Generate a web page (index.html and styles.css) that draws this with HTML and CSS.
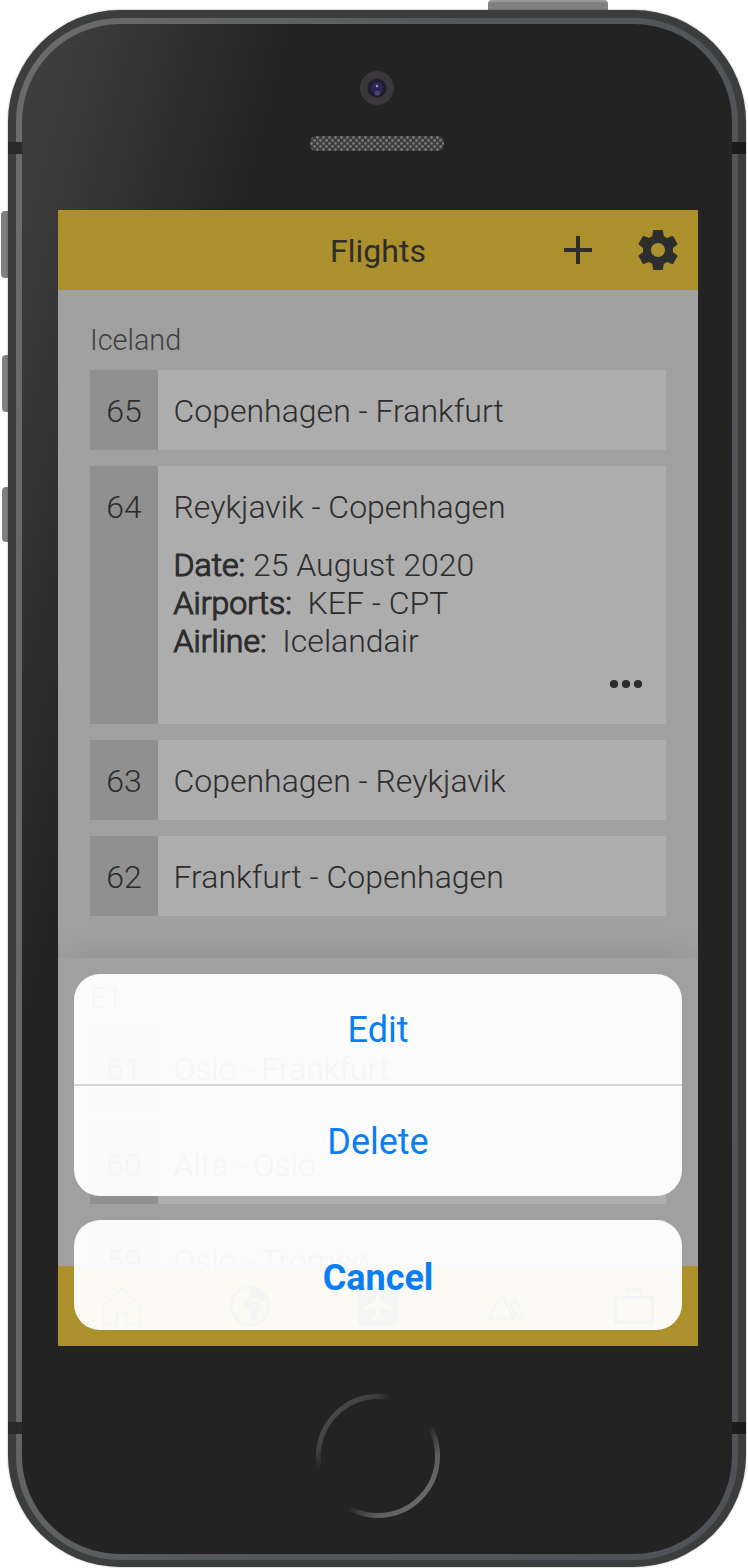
FILE: index.html
```html
<!DOCTYPE html>
<html lang="en">
<head>
<meta charset="utf-8">
<title>Flights</title>
<link rel="stylesheet" href="styles.css">
</head>
<body>
<div class="device">
  <i class="key key-power"></i>
  <i class="key key-mute"></i>
  <i class="key key-up"></i>
  <i class="key key-down"></i>
  <div class="shell">
    <div class="ring">
      <div class="face">
        <div class="top-bezel">
          <svg class="camera" viewBox="0 0 34 34">
            <circle cx="17" cy="17" r="17" fill="#3a383b"/>
            <circle cx="17" cy="17" r="9.5" fill="#211d30"/>
            <circle cx="17" cy="17" r="6" fill="#2b2650"/>
            <circle cx="17.5" cy="22" r="2.6" fill="#4b4775"/>
            <circle cx="17" cy="15" r="1.3" fill="#9a94c4"/>
          </svg>
          <svg class="speaker" viewBox="0 0 134 15">
            <defs>
              <pattern id="mesh" width="6" height="6" patternUnits="userSpaceOnUse">
                <rect width="6" height="6" fill="#3b3b3b"/>
                <circle cx="1.5" cy="1.5" r="1.4" fill="#777"/>
                <circle cx="4.5" cy="4.5" r="1.4" fill="#777"/>
              </pattern>
            </defs>
            <rect width="134" height="15" rx="6" fill="url(#mesh)"/>
          </svg>
        </div>

        <div class="screen">
          <header class="navbar">
            <h1>Flights</h1>
            <div class="actions">
              <svg class="add" viewBox="0 0 48 48"><path d="M38 26H26v12h-4V26H10v-4h12V10h4v12h12z"/></svg>
              <svg class="gear" viewBox="0 0 24 24"><path d="M19.43 12.98c.04-.32.07-.64.07-.98s-.03-.66-.07-.98l2.11-1.65c.19-.15.24-.42.12-.64l-2-3.46c-.12-.22-.39-.3-.61-.22l-2.49 1c-.52-.4-1.08-.73-1.69-.98l-.38-2.65C14.46 2.18 14.25 2 14 2h-4c-.25 0-.46.18-.49.42l-.38 2.65c-.61.25-1.17.59-1.69.98l-2.49-1c-.23-.09-.49 0-.61.22l-2 3.46c-.13.22-.07.49.12.64l2.11 1.65c-.04.32-.07.65-.07.98s.03.66.07.98l-2.11 1.65c-.19.15-.24.42-.12.64l2 3.46c.12.22.39.3.61.22l2.49-1c.52.4 1.08.73 1.69.98l.38 2.65c.03.24.24.42.49.42h4c.25 0 .46-.18.49-.42l.38-2.65c.61-.25 1.17-.59 1.69-.98l2.49 1c.23.09.49 0 .61-.22l2-3.46c.12-.22.07-.49-.12-.64l-2.11-1.65zM12 15.5c-1.93 0-3.5-1.57-3.5-3.5s1.57-3.5 3.5-3.5 3.5 1.57 3.5 3.5-1.57 3.5-3.5 3.5z"/></svg>
            </div>
          </header>

          <main class="content">
            <section class="trip trip-first">
              <h2>Iceland</h2>
              <div class="flights">
                <article class="flight"><div class="num">65</div><div class="route">Copenhagen - Frankfurt</div></article>
                <article class="flight open">
                  <div class="num">64</div>
                  <div class="body">
                    <div class="route">Reykjavik - Copenhagen</div>
                    <dl>
                      <div><dt>Date:</dt> <dd>25 August 2020</dd></div>
                      <div><dt>Airports:</dt>&nbsp; <dd>KEF - CPT</dd></div>
                      <div><dt>Airline:</dt>&nbsp; <dd>Icelandair</dd></div>
                    </dl>
                    <svg class="more" viewBox="0 0 32 8"><circle cx="4" cy="4" r="4.1"/><circle cx="16" cy="4" r="4.1"/><circle cx="28" cy="4" r="4.1"/></svg>
                  </div>
                </article>
                <article class="flight"><div class="num">63</div><div class="route">Copenhagen - Reykjavik</div></article>
                <article class="flight"><div class="num">62</div><div class="route">Frankfurt - Copenhagen</div></article>
              </div>
            </section>
            <section class="trip">
              <h2>E1</h2>
              <div class="flights">
                <article class="flight"><div class="num">61</div><div class="route">Oslo - Frankfurt</div></article>
                <article class="flight"><div class="num">60</div><div class="route">Alta - Oslo</div></article>
                <article class="flight"><div class="num">59</div><div class="route">Oslo - Tromsø</div></article>
              </div>
            </section>
          </main>

          <nav class="tabs">
            <svg viewBox="0 0 40 40"><path class="line thin" d="M1.5 20.5 20 2.5l18.5 18v18H24.500V27h-9.500v11.500H1.500z"/></svg>
            <svg viewBox="0 0 40 40">
              <circle class="line" cx="20" cy="20" r="18.800"/>
              <path d="M14 17l3-3 4 0 2 1.500 5 .5 2 4 3 0-2 4-3 3-1 4-3 3.500-2-1-1.500-5 0-4-1.500-1-4-.5-2-2.500z"/>
              <path d="M18 9l3-2.500-2-1.500 4-3 6 2 5 5 3 7-3-2-2 1-3-2.500-2 1-3-1.500-3 1.500-3 0 1-2 3-1 0-2z"/>
              <path d="M2 25l3 2 3.500 2 .5 3.500-1 2.500-4-5zM32 27l2.500-2-.5 4.500-2.500 1.500z"/>
            </svg>
            <svg viewBox="0 0 40 40"><path fill-rule="evenodd" d="M5 0h30a5 5 0 0 1 5 5v30a5 5 0 0 1-5 5H5a5 5 0 0 1-5-5V5a5 5 0 0 1 5-5zm15 3c-1.200 0-2 1.500-2 3.500v8L5 22v3l13-4v8l-3.500 3v2.500l5.500-1.500 5.500 1.500V32L22 29v-8l13 4v-3l-13-7.500v-8C22 4.500 21.200 3 20 3z"/></svg>
            <svg viewBox="0 0 40 40"><path class="line" d="M2.500 32.500 16 9l11.500 23.500zM24.500 19.500 29 13.500l9 19h-6z"/></svg>
            <svg viewBox="0 0 40 40"><path class="line wide" d="M1.500 11.500h37V36h-37zM13 8V3.500h14V8"/></svg>
          </nav>

          <div class="sheet">
            <div class="group">
              <button>Edit</button>
              <button>Delete</button>
            </div>
            <div class="group"><button class="cancel">Cancel</button></div>
          </div>
        </div>

        <div class="bottom-bezel">
          <svg class="home" viewBox="0 0 126 126">
            <defs>
              <linearGradient id="rim" x1="0" y1="0" x2="1" y2="1">
                <stop offset=".1" stop-color="#4a4a4a"/>
                <stop offset=".22" stop-color="#424242"/>
                <stop offset=".31" stop-color="#232323"/>
                <stop offset=".59" stop-color="#232323"/>
                <stop offset=".74" stop-color="#5c5c5c"/>
                <stop offset=".9" stop-color="#6c6c6c"/>
              </linearGradient>
            </defs>
            <circle cx="63" cy="63" r="59.500" fill="none" stroke="url(#rim)" stroke-width="5"/>
          </svg>
        </div>
      </div>
    </div>
    <i class="seam seam-tl"></i>
    <i class="seam seam-tr"></i>
    <i class="seam seam-bl"></i>
    <i class="seam seam-br"></i>
  </div>
</div>
</body>
</html>
```
FILE: styles.css
```css
* { box-sizing: border-box; }

body {
  margin: 0;
  background: #fff;
  font-family: Roboto, "Liberation Sans", sans-serif;
  font-weight: 300;
  color: #2c2c2c;
}

h1, h2, dl, dd { margin: 0; font-weight: inherit; }

.device {
  position: relative;
  width: 748px;
  height: 1568px;
  padding: 10px 2px 1px 8px;
  overflow: hidden;
}

.key { position: absolute; background: #808080; }
.key-power { left: 488px; top: 0; width: 120px; height: 12px; border-radius: 4px 4px 0 0; border-top: 2px solid #999; }
.key-mute { left: 1px; top: 211px; width: 10px; height: 67px; border-radius: 4px 0 0 4px; }
.key-up { left: 2px; top: 355px; width: 10px; height: 57px; border-radius: 4px 0 0 4px; }
.key-down { left: 2px; top: 487px; width: 10px; height: 55px; border-radius: 4px 0 0 4px; }

.shell {
  position: relative;
  height: 1557px;
  padding: 8px;
  border-radius: 112px;
  background: #3c3e3e;
  box-shadow: 0 0 2px rgba(0, 0, 0, .4);
}

.ring {
  height: 1542px;
  padding: 6px;
  border-radius: 104px;
  background: linear-gradient(100deg, #6c6c6c 0%, #636464 25%, #53585a 45%, #505257 100%);
}

.face {
  display: flex;
  flex-direction: column;
  align-items: center;
  width: 710px;
  height: 1530px;
  border-radius: 98px;
  background: linear-gradient(105deg, #3f3f3f 0%, #393939 8%, #2b2b2b 18%, #232323 25%);
}

.seam { position: absolute; width: 14px; height: 12px; background: #2a2a2b; }
.seam-tl { left: 0; top: 132px; }
.seam-tr { right: 0; top: 132px; background: #1b1c1d; }
.seam-bl { left: 0; top: 1412px; }
.seam-br { right: 0; top: 1412px; background: #1b1c1d; }

.top-bezel {
  display: flex;
  flex-direction: column;
  align-items: center;
  gap: 31px;
  flex: 0 0 186px;
  padding-top: 47px;
}
.camera { width: 34px; height: 34px; }
.speaker { width: 134px; height: 15px; }

.screen {
  position: relative;
  display: flex;
  flex-direction: column;
  flex: 0 0 1136px;
  width: 640px;
  margin-left: 2px;
  overflow: hidden;
  background: #a0a0a0;
}

.navbar {
  display: grid;
  grid-template-columns: 1fr auto 1fr;
  align-items: center;
  flex: 0 0 80px;
  background: #ac902c;
}
.navbar h1 {
  grid-column: 2;
  font-size: 32px;
  font-weight: 400;
  line-height: 40px;
  padding-top: 1px;
}
.actions { display: flex; justify-content: flex-end; gap: 32px; padding-right: 16px; }
.actions svg { width: 48px; height: 48px; fill: #2d2d2d; }

.content { flex: 1; min-height: 0; overflow: hidden; }

.trip {
  padding: 22px 32px 42px;
  background: #a0a0a0;
  box-shadow: 0 0 40px -8px rgba(0, 0, 0, .18);
}
.trip-first { padding-top: 32px; }
.trip h2 {
  height: 48px;
  padding-top: 1px;
  font-size: 28.800px;
  line-height: 34px;
  color: #3f3f3f;
}
.flights { display: flex; flex-direction: column; gap: 16px; }

.flight { display: flex; height: 80px; background: #adadad; font-size: 32px; line-height: 80px; }
.open { height: 258px; }
.num { width: 68px; text-align: center; background: #909090; padding-top: 1px; }
.route { height: 80px; padding: 1px 0 0 15.500px; white-space: nowrap; }
.body { flex: 1; display: flex; flex-direction: column; }
dl { padding-left: 15.500px; line-height: 38px; }
dt, dd { display: inline; }
dt { -webkit-text-stroke: 1.200px #2c2c2c; }
.more { align-self: flex-end; width: 32px; height: 8px; margin: 20px 24px 0 0; fill: #2c2c2c; overflow: visible; }

.tabs {
  display: grid;
  grid-template-columns: repeat(5, 1fr);
  place-items: center;
  flex: 0 0 80px;
  background: #ac902c;
}
.tabs svg { width: 40px; height: 40px; fill: #2d2d40; }
.tabs .line { fill: none; stroke: #2d2d40; stroke-width: 2.200px; }
.tabs .thin { stroke-width: 1.500px; }
.tabs .wide { stroke-width: 3px; }

.sheet {
  position: absolute;
  inset: auto 16px 16px;
  display: flex;
  flex-direction: column;
  gap: 24px;
}
.group { border-radius: 26px; background: rgba(255, 255, 255, .953); overflow: hidden; }
.group button {
  display: block;
  width: 100%;
  height: 110px;
  padding: 2px 0 0;
  border: 0;
  background: none;
  font: 400 36px/42px Roboto, "Liberation Sans", sans-serif;
  color: #0a7ff5;
}
.group button + button { height: 112px; border-top: 2px solid #d6d6d6; }
.group .cancel { font-weight: 700; padding-top: 6px; }

.bottom-bezel { padding: 47px 0 0 1px; }
.home { display: block; width: 126px; height: 126px; }
```
